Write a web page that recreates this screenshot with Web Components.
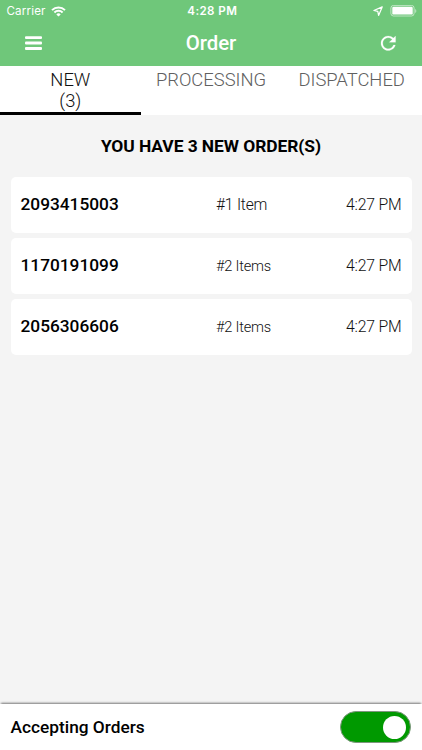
<!DOCTYPE html>
<html lang="en">
<head>
<meta charset="utf-8">
<title>Order</title>
<style>
html,body{margin:0;height:100%}
body{font-family:Roboto,"Liberation Sans",sans-serif;color:#111;overflow:hidden}
</style>
</head>
<body>
<order-app></order-app>
<script>
function define(name, html) {
  customElements.define(name, class extends HTMLElement {
    constructor() {
      super();
      const t = document.createElement('template');
      t.innerHTML = html;
      this.attachShadow({ mode: 'open' }).append(t.content.cloneNode(true));
    }
  });
}

define('status-bar', `<style>
:host{display:grid;grid-template-columns:1fr auto 1fr;align-items:center;height:22px;padding:0 5px 0 6.5px;font-family:Inter,"Liberation Sans",sans-serif;font-size:12px;color:#fff}
div{display:flex;align-items:center}
.l{gap:5px}.r{justify-content:flex-end;gap:7px}
.c{font-size:11.6px;letter-spacing:.15px}
b{margin-left:1px;font-size:11.6px;font-weight:600;letter-spacing:.4px}
svg{display:block}
</style>
<div class="l"><span class="c">Carrier</span>
<svg width="15" height="11" viewBox="0 0 15 11" fill="none" stroke="#fff" stroke-width="2"><path d="M1 4.1a9.3 9.3 0 0 1 13 0M3.4 6.5a5.9 5.9 0 0 1 8.2 0"/><path d="M7.5 10.6 5.3 8.4a3.1 3.1 0 0 1 4.4 0z" fill="#fff" stroke="none"/></svg></div>
<b>4:28 PM</b>
<div class="r"><svg width="10" height="11" viewBox="0 0 10 11" fill="none" stroke="#fff" stroke-width="1.2" stroke-linejoin="round"><path d="M9.2.9.9 4.5l3.9.9.8 4z"/></svg>
<svg width="27" height="12" viewBox="0 0 27 12"><rect x=".9" y=".4" width="23.2" height="10.6" rx="2.6" fill="none" stroke="#fff" stroke-opacity=".55"/><rect x="2.3" y="1.8" width="20.4" height="7.8" rx="1.2" fill="#fff"/><path d="M25.2 4v4c1.5-.6 1.5-3.4 0-4z" fill="#fff" fill-opacity=".55"/></svg></div>`);

define('nav-bar', `<style>
:host{display:grid;grid-template-columns:1fr auto 1fr;align-items:center;height:44px;padding:0 23px 0 25px;color:#fff}
h1{margin:0 2px 0 0;font-size:20.4px;line-height:24px;font-weight:500;padding-bottom:2px}
svg{display:block}.r{justify-self:end}
</style>
<svg width="17" height="16" viewBox="0 0 17 16" fill="#fff"><rect y=".2" width="17" height="2.9" rx="1"/><rect y="5.6" width="17" height="2.9" rx="1"/><rect y="11" width="17" height="2.9" rx="1"/></svg>
<h1><slot></slot></h1>
<svg class="r" width="22" height="22" viewBox="0 0 24 24" fill="#fff" stroke="#fff" stroke-width=".2"><path transform="translate(.3 -.8)" d="M17.65 6.35A7.958 7.958 0 0 0 12 4c-4.42 0-7.99 3.58-7.99 8s3.57 8 7.99 8c3.73 0 6.84-2.55 7.73-6h-2.08A5.99 5.99 0 0 1 12 18c-3.31 0-6-2.69-6-6s2.69-6 6-6c1.66 0 3.14.69 4.22 1.78L13 11h7V4l-2.35 2.35z"/></svg>`);

define('order-tab', `<style>
:host{display:block;box-sizing:border-box;height:49px;padding-top:3px;text-align:center;font-size:18.4px;line-height:21px;font-weight:300;color:#606060;border-bottom:3px solid transparent}
:host([active]){color:#111;border-color:#000}
</style><slot></slot>`);

define('tab-bar', `<style>
:host{display:grid;grid-template-columns:repeat(3,1fr);background:#fff}
</style><slot></slot>`);

define('order-row', `<style>
:host{display:grid;grid-template-columns:195.5px 1fr auto;align-items:center;height:56px;box-sizing:border-box;padding:0 10px;background:#fff;border-radius:5px;font-size:15.8px;letter-spacing:-.2px;font-weight:300}
::slotted(*){display:block}
::slotted([slot=id]){font-size:17.3px;font-weight:500;color:#000;letter-spacing:0;padding-bottom:1px}
::slotted([slot=items]){font-size:15.6px}
::slotted([slot=items].small){font-size:14.6px}
</style><slot name="id"></slot><slot name="items"></slot><slot name="time"></slot>`);

define('order-list', `<style>
:host{display:flex;flex-direction:column;gap:5px;padding:0 10.5px}
</style><slot></slot>`);

define('toggle-switch', `<style>
:host{display:flex;justify-content:flex-end;align-items:center;box-sizing:border-box;width:71px;height:32px;padding-right:4px;border-radius:16px;background:#090;border:1px solid #7f967f}
i{width:23px;height:23px;border-radius:50%;background:#fff}
</style><i></i>`);

define('accept-bar', `<style>
:host{display:flex;align-items:center;justify-content:space-between;box-sizing:border-box;height:46px;padding:0 11px 0 10.5px;background:#fff;font-size:17.3px;font-weight:500;color:#000;box-shadow:0 -2px 2px -1px #777}
</style><span><slot></slot></span><toggle-switch></toggle-switch>`);

define('order-app', `<style>
:host{display:flex;flex-direction:column;height:100vh;background:#f4f4f4}
header{background:#6fc77a}
tab-bar{flex:none}
h2{margin:0;padding:20.5px 0 20px;text-align:center;font-size:17.4px;letter-spacing:-.05px;line-height:21px;font-weight:700;color:#000}
main{flex:1}
</style>
<header><status-bar></status-bar><nav-bar>Order</nav-bar></header>
<tab-bar><order-tab active>NEW<br>(3)</order-tab><order-tab>PROCESSING</order-tab><order-tab>DISPATCHED</order-tab></tab-bar>
<main><h2>YOU HAVE 3 NEW ORDER(S)</h2>
<order-list>
<order-row><span slot="id">2093415003</span><span slot="items">#1 Item</span><span slot="time">4:27 PM</span></order-row>
<order-row><span slot="id">1170191099</span><span slot="items" class="small">#2 Items</span><span slot="time">4:27 PM</span></order-row>
<order-row><span slot="id">2056306606</span><span slot="items" class="small">#2 Items</span><span slot="time">4:27 PM</span></order-row>
</order-list></main>
<accept-bar>Accepting Orders</accept-bar>`);
</script>
</body>
</html>
